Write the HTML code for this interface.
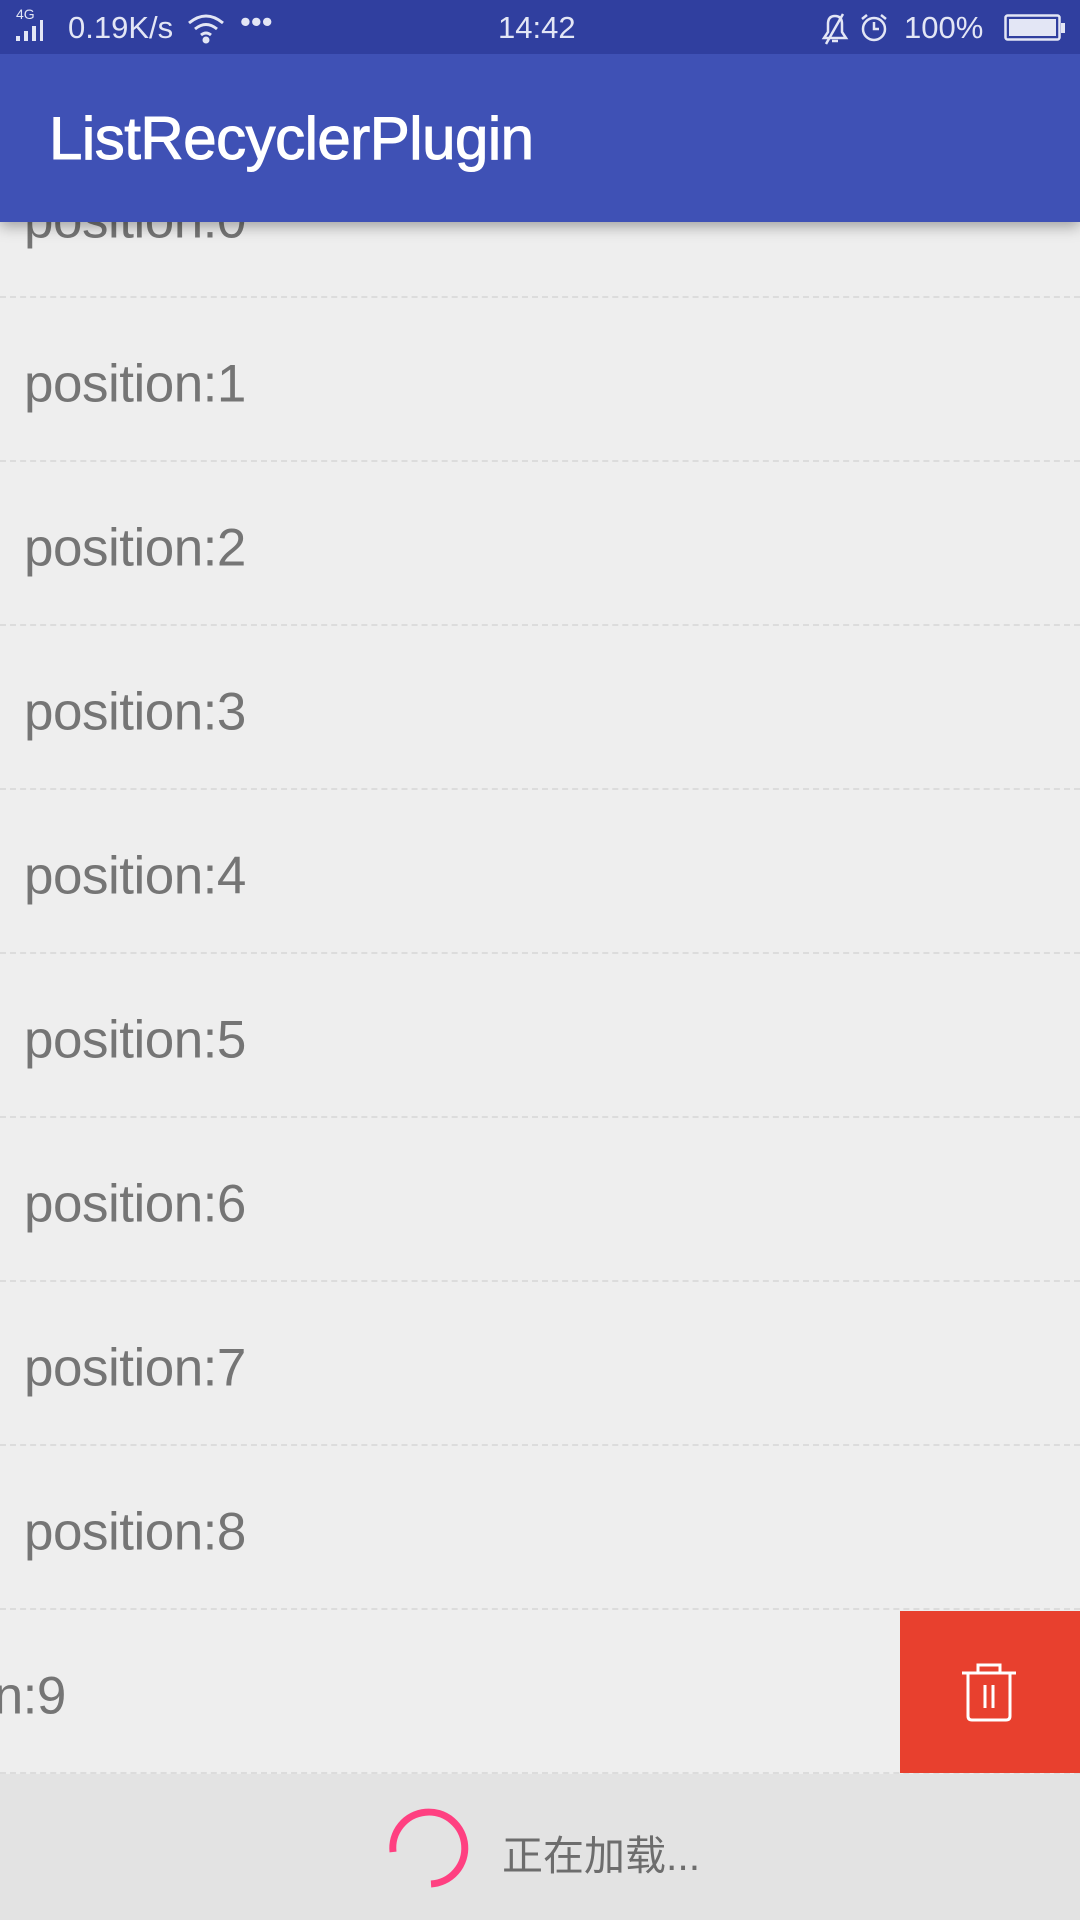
<!DOCTYPE html>
<html><head><meta charset="utf-8"><style>
*{margin:0;padding:0;box-sizing:border-box}
body{width:1080px;height:1920px;overflow:hidden;background:#eeeeee;font-family:"Liberation Sans","Noto Sans CJK SC",sans-serif;position:relative}
.sb{position:absolute;left:0;top:0;width:1080px;height:54px;background:#303f9f;color:#e3e6f5;font-size:31px;z-index:3}
.sb span{position:absolute;top:10px}
.ab{position:absolute;left:0;top:54px;width:1080px;height:168px;background:#3f51b5;z-index:2;box-shadow:0 4px 14px rgba(0,0,0,.35)}
.ab h1{position:absolute;left:49px;top:50px;font-size:60px;font-weight:normal;-webkit-text-stroke:1px #fff;color:#fff;letter-spacing:-0.5px}
.row{position:absolute;left:0;width:1080px;height:164px;border-bottom:2px dashed #dcdcdc}
.row span{position:absolute;left:24px;top:50%;transform:translateY(-42%);font-size:53px;color:#757575;letter-spacing:-0.5px;white-space:nowrap}
.del{position:absolute;left:900px;top:1611px;width:180px;height:162px;background:#e8402e}
.ft{position:absolute;left:0;top:1774px;width:1080px;height:146px;background:#e3e3e3}
</style></head><body>
<div class="sb">
<span style="left:16px;top:6px;font-size:14px">4G</span>
<svg style="position:absolute;left:14px;top:18px" width="42" height="24"><rect x="2" y="18" width="4" height="5" fill="#e3e6f5"/><rect x="10" y="13" width="4" height="10" fill="#e3e6f5"/><rect x="18" y="8" width="4" height="15" fill="#e3e6f5"/><rect x="26" y="2" width="3" height="21" fill="#e3e6f5"/></svg>
<span style="left:68px">0.19K/s</span>
<svg style="position:absolute;left:186px;top:12px" width="40" height="32" fill="none" stroke="#e3e6f5" stroke-width="3"><path d="M3 11 Q20 -3 37 11"/><path d="M9 17 Q20 8 31 17"/><path d="M15 23 Q20 19 25 23"/><circle cx="20" cy="28" r="2" fill="#e3e6f5"/></svg>
<span style="left:240px;top:4px">•••</span>
<span style="left:498px">14:42</span>
<svg style="position:absolute;left:818px;top:12px" width="34" height="34" fill="none" stroke="#e3e6f5" stroke-width="2.5"><path d="M6 26 L28 26 L24 20 L24 12 Q24 4 17 4 Q10 4 10 12 L10 20 Z"/><path d="M14 29 L20 29"/><path d="M25 2 L8 32"/></svg>
<svg style="position:absolute;left:858px;top:12px" width="32" height="32" fill="none" stroke="#e3e6f5" stroke-width="2.5"><circle cx="16" cy="17" r="11"/><path d="M16 10 L16 17 L21 17"/><path d="M4 7 L9 3 M28 7 L23 3"/></svg>
<span style="left:904px">100%</span>
<svg style="position:absolute;left:1004px;top:14px" width="62" height="28"><rect x="1.5" y="1.5" width="54" height="24" rx="2" fill="none" stroke="#e3e6f5" stroke-width="2.5"/><rect x="5" y="5" width="47" height="17" fill="#e3e6f5"/><rect x="57" y="9" width="4" height="10" fill="#e3e6f5"/></svg>
</div>
<div class="ab"><h1>ListRecyclerPlugin</h1></div>
<div class="row" style="top:134px"><span>position:0</span></div>
<div class="row" style="top:298px"><span>position:1</span></div>
<div class="row" style="top:462px"><span>position:2</span></div>
<div class="row" style="top:626px"><span>position:3</span></div>
<div class="row" style="top:790px"><span>position:4</span></div>
<div class="row" style="top:954px"><span>position:5</span></div>
<div class="row" style="top:1118px"><span>position:6</span></div>
<div class="row" style="top:1282px"><span>position:7</span></div>
<div class="row" style="top:1446px"><span>position:8</span></div>
<div class="row" style="top:1610px;overflow:hidden"><span style="left:-156px">position:9</span></div>
<div class="del"><svg style="position:absolute;left:61px;top:51px" width="56" height="60" fill="none" stroke="#fff" stroke-width="3"><path d="M1 11 L55 11"/><path d="M17 11 L17 3 L39 3 L39 11"/><path d="M7 11 L7 54 Q7 58 11 58 L45 58 Q49 58 49 54 L49 11"/><path d="M24 23 L24 46 M32 23 L32 46"/></svg></div>
<div class="ft">
<svg style="position:absolute;left:387px;top:32px" width="84" height="84" fill="none" stroke="#ff4081" stroke-width="7"><path d="M6 46 A36 36 0 1 1 44 78"/></svg>
<span style="position:absolute;left:502px;top:48px;font-size:41px;color:#6d6d6d">正在加载...</span>
</div>
</body></html>
